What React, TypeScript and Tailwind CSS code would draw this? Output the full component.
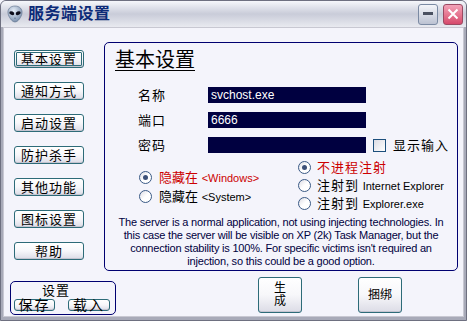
import React from 'react';

const FONT = "font-['Liberation_Sans','Noto_Sans_CJK_SC',sans-serif]";

function Btn({
  children,
  className = '',
  focused = false,
}: {
  children: React.ReactNode;
  className?: string;
  focused?: boolean;
}) {
  return (
    <div
      className={`flex items-center justify-center rounded-[3px] border border-[#2d6b78] bg-gradient-to-b from-[#ffffff] via-[#f7f7fa] to-[#dcdce6] text-black shadow-[inset_0_-1px_0_#c4c4d0] ${
        focused ? 'outline outline-1 outline-[#2d6b78] -outline-offset-3' : ''
      } ${className}`}
    >
      {children}
    </div>
  );
}

function Radio({ checked = false }: { checked?: boolean }) {
  return (
    <div className="flex h-[13px] w-[13px] shrink-0 items-center justify-center rounded-full border border-[#3a5a86] bg-gradient-to-br from-[#dcdce4] via-white to-white">
      {checked && <div className="h-[5px] w-[5px] rounded-full bg-[#3c5078]" />}
    </div>
  );
}

function AlienIcon() {
  return (
    <svg width="16" height="18" viewBox="0 0 16 18">
      <defs>
        <radialGradient id="hd" cx="40%" cy="30%" r="70%">
          <stop offset="0" stopColor="#e6eef8" />
          <stop offset="1" stopColor="#7b90ad" />
        </radialGradient>
      </defs>
      <path d="M8 1 C13 1 15.5 4.5 15 8 C14.5 12 11 17 8 17 C5 17 1.5 12 1 8 C0.5 4.5 3 1 8 1 Z" fill="url(#hd)" stroke="#5a6d88" strokeWidth="0.6" />
      <ellipse cx="4.8" cy="8.2" rx="2.6" ry="1.8" transform="rotate(25 4.8 8.2)" fill="#0d0d1a" />
      <ellipse cx="11.2" cy="8.2" rx="2.6" ry="1.8" transform="rotate(-25 11.2 8.2)" fill="#0d0d1a" />
      <path d="M7 13.2 H9" stroke="#4a5a72" strokeWidth="0.6" />
    </svg>
  );
}

export default function App() {
  return (
    <div className={`${FONT} h-[321px] w-[467px] overflow-hidden bg-[#f4f4fb]`}>
      <div className="flex h-full w-full flex-col rounded-t-[6px] border border-[#6e7080] bg-[#a8aab8]">
        {/* Title bar */}
        <div className="flex h-[26px] shrink-0 items-center rounded-t-[5px] bg-gradient-to-b from-[#f6f7fb] via-[#c9ccd9] to-[#e9eaf0] pl-[6px] pr-[3px]">
          <AlienIcon />
          <span className="ml-[5px] text-[16px] font-bold leading-none tracking-[0.5px] text-[#0c2a78]">服务端设置</span>
          <div className="ml-auto flex gap-[5px]">
            <div className="flex h-[21px] w-[20px] items-center justify-center rounded-[3px] border border-[#7b8aa3] bg-gradient-to-b from-[#f4f5f9] to-[#bcc2d2]">
              <div className="mt-[-2px] h-[3px] w-[10px] bg-[#4a5060]" />
            </div>
            <div className="flex h-[21px] w-[20px] items-center justify-center rounded-[3px] border border-[#9b4a62] bg-gradient-to-b from-[#f2a2b8] to-[#d6486c]">
              <svg width="12" height="12" viewBox="0 0 12 12">
                <path d="M1.5 1.5 L10.5 10.5 M10.5 1.5 L1.5 10.5" stroke="#fff" strokeWidth="2" />
              </svg>
            </div>
          </div>
        </div>

        {/* Client area */}
        <div className="mx-[2px] mb-[3px] flex flex-1 flex-col border border-[#c8c8d2] bg-[#f4f4fb]">
          <div className="flex pt-[14px]">
            {/* Left nav */}
            <div className="flex w-[100px] shrink-0 flex-col gap-[14px] pl-[10px] pt-[8px]">
              {['基本设置', '通知方式', '启动设置', '防护杀手', '其他功能', '图标设置', '帮助'].map((t, i) => (
                <Btn key={t} focused={i === 0} className="h-[18px] w-[70px] text-[13px] leading-none tracking-[1px]">
                  {t}
                </Btn>
              ))}
            </div>

            {/* Main group */}
            <div className="flex h-[229px] w-[354px] flex-col rounded-[5px] border border-[#000070]">
              <div className="ml-[10px] mt-[6px] h-[22px] text-[20px] leading-[22px] text-black underline decoration-1 underline-offset-[3px]">
                基本设置
              </div>

              <div className="mt-[16px] flex flex-col gap-[9px]">
                {[
                  ['名称', 'svchost.exe'],
                  ['端口', '6666'],
                  ['密码', ''],
                ].map(([l, v], i) => (
                  <div key={l} className="flex h-[16px] items-center">
                    <span className="ml-[33px] w-[70px] text-[13px] leading-none tracking-[1px] text-black">{l}</span>
                    <div className="flex h-[16px] w-[158px] items-center bg-[#000040] pl-[3px] text-[12px] leading-none text-white">
                      {v}
                    </div>
                    {i === 2 && (
                      <>
                        <div className="ml-[7px] h-[13px] w-[13px] border border-[#1c4f7c] bg-gradient-to-br from-[#dcdce4] to-white" />
                        <span className="ml-[7px] text-[13px] leading-none tracking-[1px] text-black">显示输入</span>
                      </>
                    )}
                  </div>
                ))}
              </div>

              <div className="mt-[8px] flex items-center">
                <div className="ml-[34px] flex w-[159px] flex-col gap-[6px] pt-[3px]">
                  <div className="flex h-[13px] items-center gap-[7px]">
                    <Radio checked />
                    <span className="text-[13px] leading-none text-[#cc0000]">
                      隐藏在 <span className="text-[11px]">&lt;Windows&gt;</span>
                    </span>
                  </div>
                  <div className="flex h-[13px] items-center gap-[7px]">
                    <Radio />
                    <span className="text-[13px] leading-none text-black">
                      隐藏在 <span className="text-[11px]">&lt;System&gt;</span>
                    </span>
                  </div>
                </div>
                <div className="flex flex-col gap-[5px]">
                  <div className="flex h-[13px] items-center gap-[6px]">
                    <Radio checked />
                    <span className="text-[13px] leading-none tracking-[1px] text-[#cc0000]">不进程注射</span>
                  </div>
                  <div className="flex h-[13px] items-center gap-[6px]">
                    <Radio />
                    <span className="text-[13px] leading-none text-black">
                      <span className="tracking-[1px]">注射到</span> <span className="text-[11px]">Internet Explorer</span>
                    </span>
                  </div>
                  <div className="flex h-[13px] items-center gap-[6px]">
                    <Radio />
                    <span className="text-[13px] leading-none text-black">
                      <span className="tracking-[1px]">注射到</span> <span className="text-[11px]">Explorer.exe</span>
                    </span>
                  </div>
                </div>
              </div>

              <p className="mx-auto mt-[6px] w-[340px] text-center text-[11px] leading-[13px] tracking-[-0.2px] text-[#000040]">
                The server is a normal application, not using injecting technologies. In this case the server will be visible on XP (2k) Task Manager, but the connection stability is 100%. For specific victims isn't required an injection, so this could be a good option.
              </p>
            </div>
          </div>

          {/* Bottom row */}
          <div className="flex items-start">
            <div className="ml-[6px] mt-[10px] flex h-[34px] w-[106px] flex-col rounded-[5px] border border-[#000070]">
              <div className="ml-[31px] mt-[1px] text-[13px] leading-[15px] tracking-[1px] text-black">设置</div>
              <div className="mt-[1px] flex gap-[13px] pl-[3px]">
                <Btn className="h-[12px] w-[41px] text-[14px] leading-none tracking-[2px]">保存</Btn>
                <Btn className="h-[12px] w-[42px] text-[14px] leading-none tracking-[2px]">载入</Btn>
              </div>
            </div>
            <Btn className="ml-[142px] mt-[6px] h-[36px] w-[44px] flex-col text-[12px] leading-[13px]">
              <span>生</span>
              <span>成</span>
            </Btn>
            <Btn className="ml-[56px] mt-[6px] h-[36px] w-[44px] text-[12px] leading-none">捆绑</Btn>
          </div>
        </div>
      </div>
    </div>
  );
}
